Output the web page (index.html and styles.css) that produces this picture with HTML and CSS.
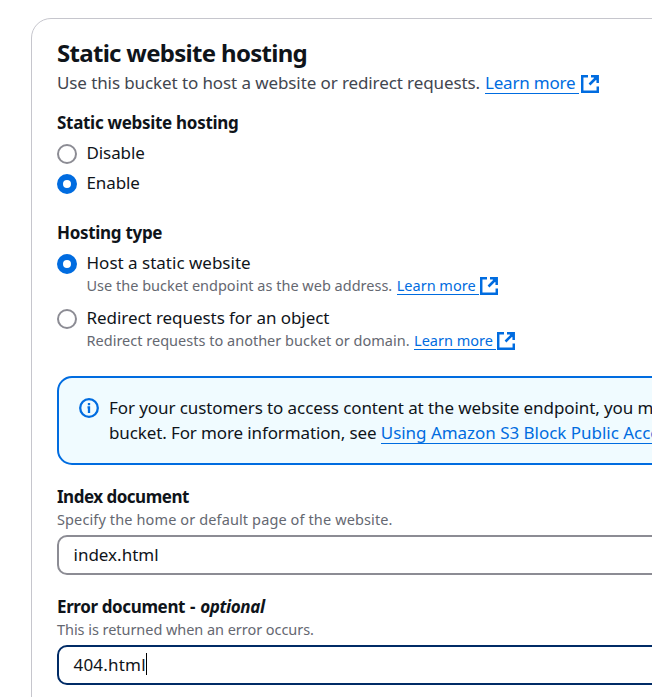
FILE: index.html
```html
<!DOCTYPE html>
<html lang="en">
<head>
<meta charset="utf-8">
<title>Static website hosting</title>
<link rel="stylesheet" href="styles.css">
</head>
<body>
<svg class="sprite" aria-hidden="true">
  <symbol id="external" viewBox="0 0 18 18">
    <path d="M7 1.200H1.200v15.600h15.600V11.500M10 1.300h6.700V8M16.500 1.500L8.500 9.500" fill="none" stroke="currentColor" stroke-width="2.500"/>
    <path d="M11.500 1H17v5.500z" fill="currentColor"/>
  </symbol>
</svg>
<main class="card">
  <h1 class="title">Static website hosting</h1>
  <p class="lead"><span>Use this bucket to host a website or redirect requests.</span><a class="link" href="#">Learn more</a><svg class="ext"><use href="#external"/></svg></p>

  <section class="group">
    <h2 class="label">Static website hosting</h2>
    <label class="option"><i class="radio"></i><span>Disable</span></label>
    <label class="option"><i class="radio checked"></i><span>Enable</span></label>
  </section>

  <section class="group">
    <h2 class="label hosting">Hosting type</h2>
    <label class="option"><i class="radio checked"></i><span class="host">Host a static website</span></label>
    <p class="hint nested"><span>Use the bucket endpoint as the web address.</span><a class="link" href="#">Learn more</a><svg class="ext"><use href="#external"/></svg></p>
    <label class="option second"><i class="radio"></i><span class="redirect">Redirect requests for an object</span></label>
    <p class="hint nested domain"><span>Redirect requests to another bucket or domain.</span><a class="link" href="#">Learn more</a><svg class="ext"><use href="#external"/></svg></p>
  </section>

  <aside class="alert">
    <svg class="info" viewBox="0 0 20 20"><circle cx="10" cy="10" r="8.800" fill="none" stroke="currentColor" stroke-width="2.300"/><path d="M10 5v2.300M8.500 9.300H10M10 8.300v6.700" fill="none" stroke="currentColor" stroke-width="2.300"/></svg>
    <div class="message"><div class="line1">For your customers to access content at the website endpoint, you must make all</div><div class="line2">bucket. For more information, see <a class="link" href="#">Using Amazon S3 Block Public Access</a></div></div>
  </aside>

  <section class="field">
    <h2 class="label index">Index document</h2>
    <p class="hint specify">Specify the home or default page of the website.</p>
    <div class="input"><span>index.html</span></div>
  </section>
  <section class="field">
    <h2 class="label error">Error document <span class="dash">-</span> <em>optional</em></h2>
    <p class="hint returned">This is returned when an error occurs.</p>
    <div class="input focused"><span>404.html</span><i class="caret"></i></div>
  </section>
</main>
</body>
</html>
```

FILE: styles.css
```css
* { box-sizing: border-box; }
html { overflow: hidden; }
body {
  margin: 0;
  width: 652px;
  height: 697px;
  overflow: hidden;
  background: #fff;
  color: #0f141a;
  font: 17px/25px "Noto Sans", sans-serif;
}
h1, h2, p { margin: 0; }
.sprite { display: none; }
.card {
  margin: 18px 0 0 31px;
  width: 900px;
  height: 760px;
  padding: 19px 25px;
  border: 1px solid #c6c6cd;
  border-radius: 20px;
  white-space: nowrap;
}
.title { font-size: 24px; line-height: 30px; letter-spacing: -0.7px; }
.lead { display: flex; margin-top: 2px; color: #424650; letter-spacing: -0.1px; }
.lead .link { margin-left: 5px; letter-spacing: -0.2px; }
.link {
  color: #006ce0;
  text-decoration: none;
  height: 24px;
  border-bottom: 1px solid #006ce0;
  padding-right: 4px;
}
.ext { width: 18px; height: 18px; margin: 5px 0 0 2px; color: #006ce0; }
.group { margin-top: 15px; }
.group + .group { margin-top: 25px; }
.label { font-size: 17px; line-height: 25px; letter-spacing: -0.3px; }
.label.index { letter-spacing: -0.5px; }
.label.error { letter-spacing: -0.38px; }
.dash { margin: 0 1px; }
.option { display: flex; margin-top: 5px; letter-spacing: -0.1px; }
.host { letter-spacing: 0; }
.redirect { letter-spacing: -0.06px; }
.radio {
  width: 20px;
  height: 20px;
  margin: 4px 9.500px 0 0;
  border: 2px solid #8c8c94;
  border-radius: 50%;
}
.radio.checked { border: 6px solid #006ce0; }
.hint { font-size: 14.500px; line-height: 20px; color: #656871; }
.nested { display: flex; margin-left: 29.500px; }
.nested .link { margin-left: 4.500px; height: 20px; padding-right: 3px; }
.nested .ext { margin: 2px 0 0 1px; }
.domain { letter-spacing: 0.01px; }
.specify { letter-spacing: 0.12px; }
.returned { letter-spacing: -0.05px; }
.second { margin-top: 10px; }
.alert {
  display: flex;
  margin-top: 26px;
  height: 89px;
  padding: 17px 20px;
  background: #f0fbff;
  border: 2px solid #006ce0;
  border-radius: 15px;
}
.info { flex: none; width: 20px; height: 20px; margin: 3px 10px 0 0; color: #006ce0; }
.line1 { letter-spacing: -0.09px; }
.line2 { letter-spacing: -0.12px; }
.message .link { display: inline-block; letter-spacing: -0.03px; }
.field { margin-top: 19px; }
.input {
  display: flex;
  align-items: center;
  height: 40px;
  margin-top: 6px;
  padding: 0 14.500px 2px;
  border: 2px solid #8c8c94;
  border-radius: 10px;
}
.input.focused { border-color: #002b66; letter-spacing: 0.2px; }
.caret { width: 1px; height: 22px; background: #000; }
```
